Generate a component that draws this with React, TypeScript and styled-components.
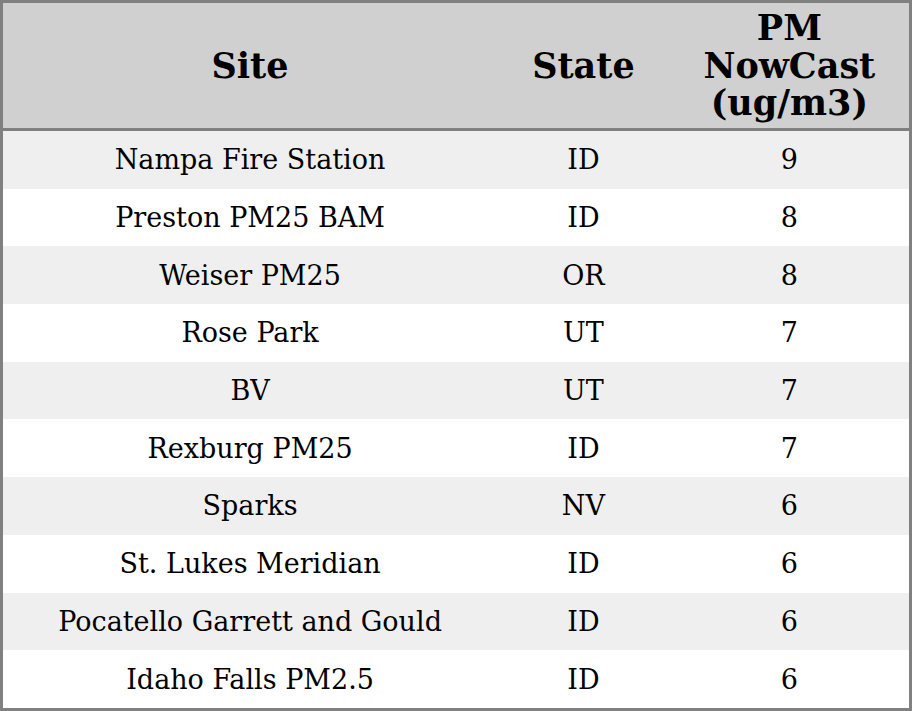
import React from "react";
import styled, { createGlobalStyle } from "styled-components";

const GlobalStyle = createGlobalStyle`
  html, body {
    margin: 0;
    padding: 0;
    background: #ffffff;
  }
`;

const Table = styled.table`
  width: 912px;
  height: 711px;
  border-collapse: collapse;
  border: 3px solid #808080;
  font-family: "DejaVu Serif", serif;
  color: #000;
  table-layout: fixed;
`;

const Col = styled.col<{ $width: number }>`
  width: ${(p) => p.$width}px;
`;

const HeadCell = styled.th`
  height: 125px;
  padding: 0;
  background: #d0d0d0;
  border-bottom: 3px solid #808080;
  font-size: 35px;
  font-weight: 700;
  line-height: 37.5px;
  text-align: center;
  vertical-align: middle;
`;

const Row = styled.tr<{ $shade: boolean }>`
  background: ${(p) => (p.$shade ? "#efefef" : "#ffffff")};
`;

const Cell = styled.td`
  height: 57px;
  padding: 0;
  font-size: 27px;
  text-align: center;
  vertical-align: middle;
`;

const rows: [string, string, number][] = [
  ["Nampa Fire Station", "ID", 9],
  ["Preston PM25 BAM", "ID", 8],
  ["Weiser PM25", "OR", 8],
  ["Rose Park", "UT", 7],
  ["BV", "UT", 7],
  ["Rexburg PM25", "ID", 7],
  ["Sparks", "NV", 6],
  ["St. Lukes Meridian", "ID", 6],
  ["Pocatello Garrett and Gould", "ID", 6],
  ["Idaho Falls PM2.5", "ID", 6],
];

export default function App() {
  return (
    <>
      <GlobalStyle />
      <Table>
        <colgroup>
          <Col $width={494} />
          <Col $width={172} />
          <Col $width={240} />
        </colgroup>
        <thead>
          <tr>
            <HeadCell>Site</HeadCell>
            <HeadCell>State</HeadCell>
            <HeadCell>
              PM
              <br />
              NowCast
              <br />
              (ug/m3)
            </HeadCell>
          </tr>
        </thead>
        <tbody>
          {rows.map(([site, state, value], i) => (
            <Row key={site} $shade={i % 2 === 0}>
              <Cell>{site}</Cell>
              <Cell>{state}</Cell>
              <Cell>{value}</Cell>
            </Row>
          ))}
        </tbody>
      </Table>
    </>
  );
}
